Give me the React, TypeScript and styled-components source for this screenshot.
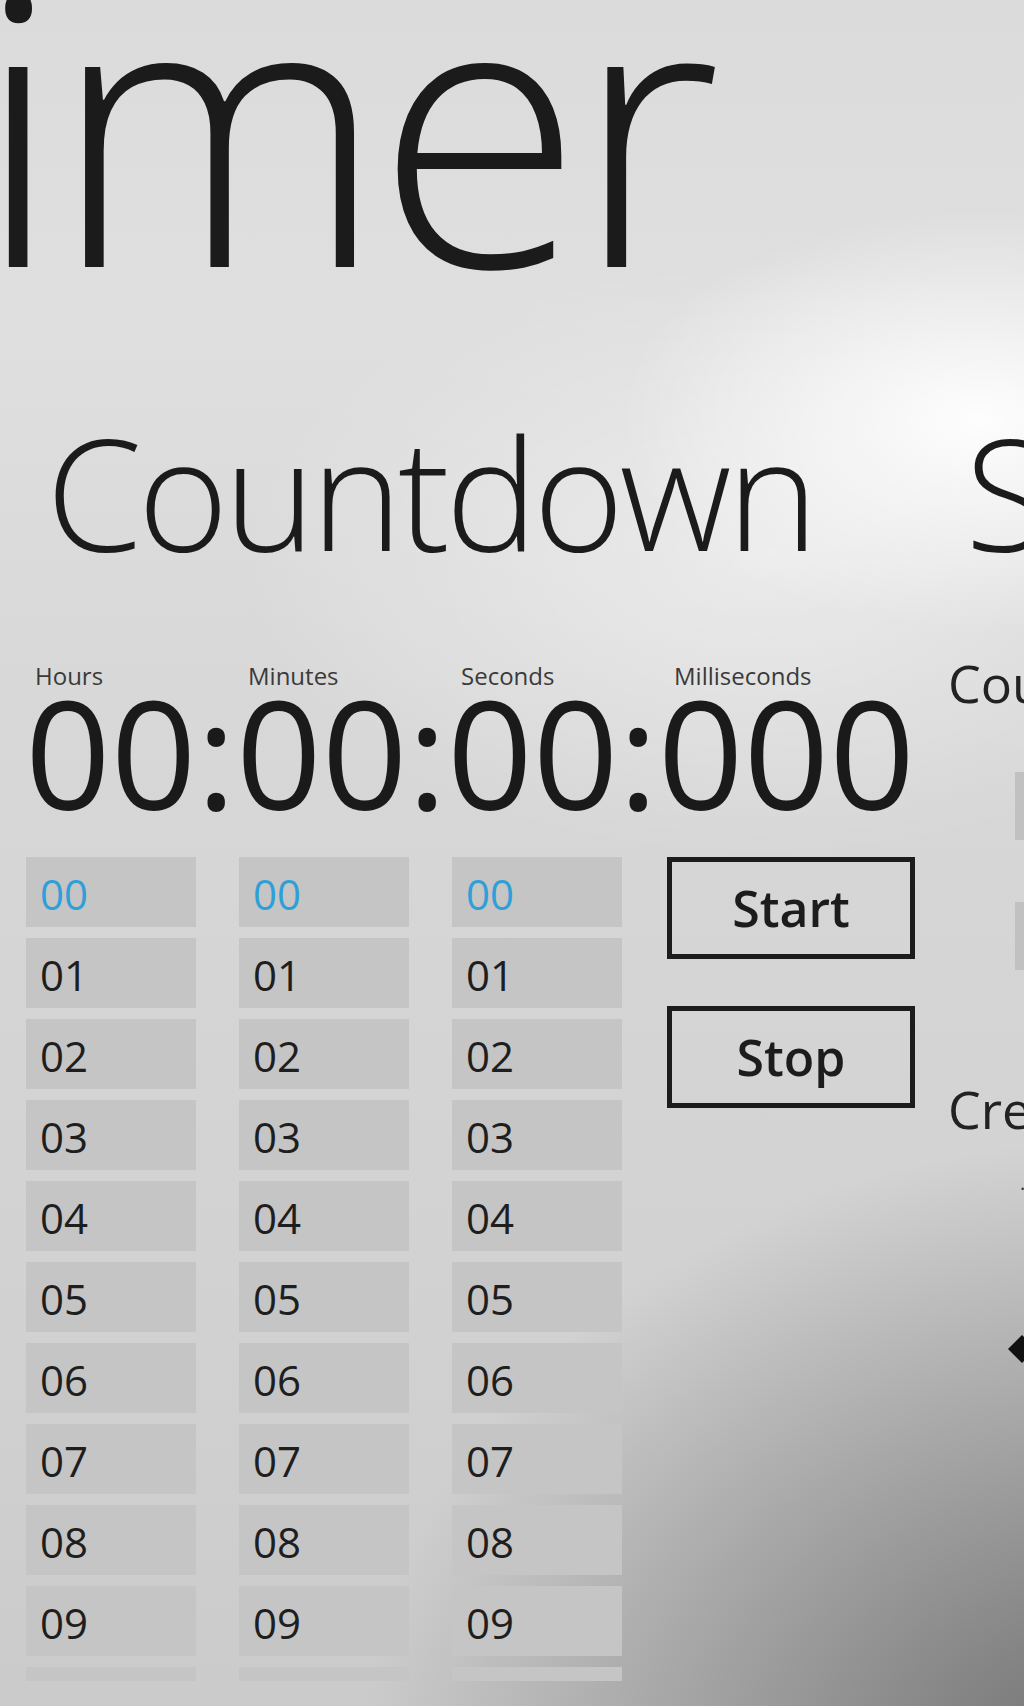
import React from "react";
import styled, { createGlobalStyle } from "styled-components";

const GlobalStyle = createGlobalStyle`
  html, body {
    margin: 0;
    padding: 0;
    overflow: hidden;
    background: #d6d6d6;
  }
  * { box-sizing: border-box; }
`;

const Page = styled.main`
  width: 1024px;
  height: 1706px;
  overflow: hidden;
  font-family: "Open Sans", "Noto Sans", "Liberation Sans", sans-serif;
  color: #1b1b1b;
  background:
    radial-gradient(ellipse 360px 210px at 980px 420px, rgba(255,255,255,0.95), rgba(255,255,255,0) 100%),
    radial-gradient(ellipse 520px 300px at 760px 560px, rgba(255,255,255,0.45), rgba(255,255,255,0) 100%),
    radial-gradient(ellipse 760px 640px at 1120px 1780px, rgba(105,105,105,0.95), rgba(120,120,120,0) 100%),
    linear-gradient(to bottom, #dbdbdb 0%, #dfdfdf 18%, #d7d7d7 45%, #d2d2d2 75%, #cbcbcb 100%);
`;

const AppTitle = styled.h1`
  margin: 0 0 0 -213px;
  font-size: 377px;
  font-weight: 300;
  line-height: 241px;
  white-space: nowrap;
  letter-spacing: -9px;
`;

const PivotHeaders = styled.nav`
  display: flex;
  gap: 151px;
  margin-top: 172px;
  padding-left: 46px;
  white-space: nowrap;
`;

const PivotHeader = styled.h2`
  margin: 0;
  font-size: 155px;
  font-weight: 300;
  line-height: 155px;
  letter-spacing: -4.5px;
`;

const Content = styled.section`
  display: flex;
  margin-top: 89px;
`;

const CountdownPanel = styled.div`
  width: 948px;
  flex: none;
  padding-top: 7px;
  display: flex;
  flex-direction: column;
`;

const UnitLabels = styled.div`
  display: grid;
  grid-template-columns: repeat(4, 213px);
  padding-left: 35px;
`;

const UnitLabel = styled.span`
  font-size: 24px;
  line-height: 24px;
  color: #3a3a3a;
`;

const TimeDisplay = styled.div`
  margin-top: 14px;
  padding-left: 25px;
  font-size: 150px;
  line-height: 100px;
  white-space: nowrap;
  color: #1a1a1a;
`;

const Controls = styled.div`
  display: flex;
  margin-top: 55px;
  padding-left: 26px;
`;

const Picker = styled.ul`
  list-style: none;
  margin: 0 43px 0 0;
  padding: 0;
  width: 170px;
  height: 824px;
  overflow: hidden;
  display: flex;
  flex-direction: column;
  gap: 11px;
`;

const PickerItem = styled.li<{ $selected?: boolean }>`
  flex: none;
  height: 70px;
  padding: 4px 0 0 14px;
  background: #c5c5c5;
  font-size: 42px;
  line-height: 66px;
  color: ${(p) => (p.$selected ? "#2f9fd8" : "#1e1e1e")};
`;

const ButtonStack = styled.div`
  display: flex;
  flex-direction: column;
  gap: 47px;
  padding-left: 2px;
`;

const ActionButton = styled.button`
  width: 248px;
  height: 102px;
  border: 5px solid #1c1c1c;
  background: transparent;
  font-family: inherit;
  font-size: 50px;
  font-weight: 600;
  color: #1c1c1c;
  padding: 0;
  line-height: 1;
`;

const SettingsPanel = styled.div`
  flex: none;
  width: 400px;
  display: flex;
  flex-direction: column;
`;

const SettingsHeader = styled.h3<{ $gap: number }>`
  margin: ${(p) => p.$gap}px 0 0 0;
  font-size: 52px;
  font-weight: 400;
  line-height: 52px;
  white-space: nowrap;
  color: #222;
`;

const SettingsField = styled.div<{ $gap: number }>`
  margin: ${(p) => p.$gap}px 0 0 67px;
  width: 300px;
  height: 68px;
  background: #c1c1c1;
`;

const CreditsLine = styled.p`
  margin: 42px 0 0 72px;
  font-size: 20px;
  line-height: 24px;
  white-space: nowrap;
  color: #333;
`;

const Logo = styled.svg`
  display: block;
  margin: 134px 0 0 60px;
`;

const pad = (n: number) => String(n).padStart(2, "0");
const values = Array.from({ length: 11 }, (_, i) => pad(i));

export default function App() {
  return (
    <>
      <GlobalStyle />
      <Page>
        <AppTitle>Timer</AppTitle>
        <PivotHeaders>
          <PivotHeader>Countdown</PivotHeader>
          <PivotHeader>Stopwatch</PivotHeader>
        </PivotHeaders>
        <Content>
          <CountdownPanel>
            <UnitLabels>
              <UnitLabel>Hours</UnitLabel>
              <UnitLabel>Minutes</UnitLabel>
              <UnitLabel>Seconds</UnitLabel>
              <UnitLabel>Milliseconds</UnitLabel>
            </UnitLabels>
            <TimeDisplay>00:00:00:000</TimeDisplay>
            <Controls>
              {["h", "m", "s"].map((k) => (
                <Picker key={k}>
                  {values.map((v, i) => (
                    <PickerItem key={v} $selected={i === 0}>
                      {v}
                    </PickerItem>
                  ))}
                </Picker>
              ))}
              <ButtonStack>
                <ActionButton>Start</ActionButton>
                <ActionButton>Stop</ActionButton>
              </ButtonStack>
            </Controls>
          </CountdownPanel>
          <SettingsPanel>
            <SettingsHeader $gap={0}>Countdown sound</SettingsHeader>
            <SettingsField $gap={63} />
            <SettingsField $gap={62} />
            <SettingsHeader $gap={113}>Credits</SettingsHeader>
            <CreditsLine>· Developer</CreditsLine>
            <Logo width="40" height="40" viewBox="0 0 40 40">
              <polygon points="0,14 14,0 28,14 14,28" fill="#111" />
            </Logo>
          </SettingsPanel>
        </Content>
      </Page>
    </>
  );
}
